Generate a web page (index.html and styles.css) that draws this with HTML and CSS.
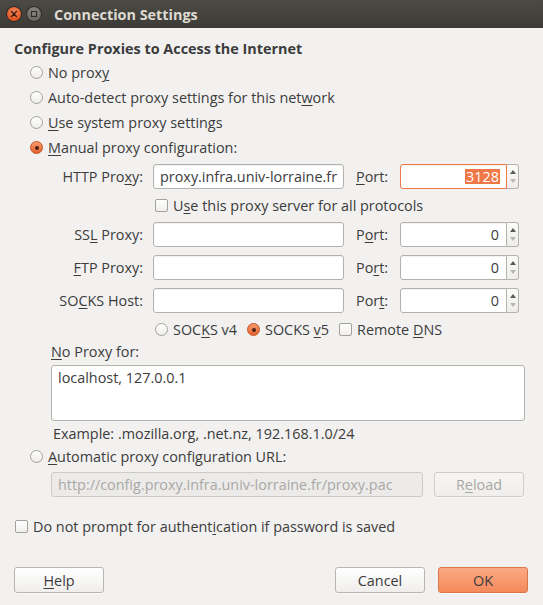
FILE: index.html
```html
<!DOCTYPE html>
<html>
<head>
<meta charset="utf-8">
<link rel="stylesheet" href="styles.css">
</head>
<body>
<div class="window">
  <div class="titlebar">
    <span class="wbtn close"><svg width="14" height="14" viewBox="0 0 14 14"><path d="M4.6 4.6 L9.4 9.4 M9.4 4.6 L4.6 9.4" stroke="#3a1a0e" stroke-width="1.4" stroke-linecap="round"/></svg></span>
    <span class="wbtn min"><svg width="14" height="14" viewBox="0 0 14 14"><rect x="4.5" y="4.5" width="5" height="5" fill="none" stroke="#2e2d2a" stroke-width="1.2"/></svg></span>
    <span class="title">Connection Settings</span>
  </div>
  <div class="content">
    <div class="heading">Configure Proxies to Access the Internet</div>
    <div class="options">
      <div class="radio-row"><span class="radio"></span><span>No prox<u>y</u></span></div>
      <div class="radio-row"><span class="radio"></span><span>Auto-detect proxy settings for this net<u>w</u>ork</span></div>
      <div class="radio-row"><span class="radio"></span><span><u>U</u>se system proxy settings</span></div>
      <div class="radio-row"><span class="radio on"></span><span><u>M</u>anual proxy configuration:</span></div>
    </div>
    <div class="proxy-grid">
      <div class="plabel"><span>HTTP Pro<u>x</u>y:</span></div>
      <div class="input"><span>proxy.infra.univ-lorraine.fr</span></div>
      <div class="portlabel"><span><u>P</u>ort:</span></div>
      <div class="input port focus"><span class="sel">3128</span></div>
      <div class="spin"><span class="up"></span><span class="down"></span></div>

      <div class="checkcell"><span class="check"></span><span>U<u>s</u>e this proxy server for all protocols</span></div>

      <div class="plabel"><span>SS<u>L</u> Proxy:</span></div>
      <div class="input"></div>
      <div class="portlabel"><span>P<u>o</u>rt:</span></div>
      <div class="input port"><span>0</span></div>
      <div class="spin"><span class="up"></span><span class="down"></span></div>

      <div class="plabel"><span><u>F</u>TP Proxy:</span></div>
      <div class="input"></div>
      <div class="portlabel"><span>Po<u>r</u>t:</span></div>
      <div class="input port"><span>0</span></div>
      <div class="spin"><span class="up"></span><span class="down"></span></div>

      <div class="plabel"><span>SO<u>C</u>KS Host:</span></div>
      <div class="input"></div>
      <div class="portlabel"><span>Por<u>t</u>:</span></div>
      <div class="input port"><span>0</span></div>
      <div class="spin"><span class="up"></span><span class="down"></span></div>

      <div class="socks">
        <span class="item"><span class="radio"></span><span>SOC<u>K</u>S v4</span></span>
        <span class="item"><span class="radio on"></span><span>SOCKS <u>v</u>5</span></span>
        <span class="item"><span class="check"></span><span>Remote <u>D</u>NS</span></span>
      </div>
    </div>
    <div class="noproxy">
      <div class="nplabel"><u>N</u>o Proxy for:</div>
      <div class="textarea">localhost, 127.0.0.1</div>
      <div class="example">Example: .mozilla.org, .net.nz, 192.168.1.0/24</div>
    </div>
    <div class="radio-row"><span class="radio"></span><span><u>A</u>utomatic proxy configuration URL:</span></div>
    <div class="urlrow">
      <div class="input disabled"><span>http://config.proxy.infra.univ-lorraine.fr/proxy.pac</span></div>
      <div class="button disabled"><span>R<u>e</u>load</span></div>
    </div>
    <div class="authrow"><span class="check"></span><span>Do not prompt for authent<u>i</u>cation if password is saved</span></div>
    <div class="buttons">
      <div class="button help"><span><u>H</u>elp</span></div>
      <div class="spacer"></div>
      <div class="button"><span>Cancel</span></div>
      <div class="button ok"><span>OK</span></div>
    </div>
  </div>
</div>
</body>
</html>
```
FILE: styles.css
```css
html, body {
  margin: 0;
  padding: 0;
  background: #f2f1f0;
}
body {
  font-family: "Open Sans", "Noto Sans", sans-serif;
  font-size: 14.4px;
  color: #3c3c3c;
}
u {
  text-decoration: underline;
  text-decoration-thickness: 1px;
  text-underline-offset: 2px;
}
.window {
  width: 543px;
  height: 605px;
  background: #f2f1f0;
  overflow: hidden;
}
.titlebar {
  height: 28px;
  background: linear-gradient(#4b4a45, #3c3b37);
  display: flex;
  align-items: center;
  padding-left: 7px;
  box-sizing: border-box;
}
.wbtn {
  width: 14px;
  height: 14px;
  border-radius: 50%;
  display: flex;
  margin-right: 6px;
}
.wbtn.close {
  background: radial-gradient(circle at 50% 35%, #f58b5e, #e0531f 70%);
  box-shadow: 0 0 0 1px #2b2a27;
}
.wbtn.min {
  background: radial-gradient(circle at 50% 35%, #8f8d87, #6b6964 70%);
  box-shadow: 0 0 0 1px #2b2a27;
}
.title {
  color: #dfdbd2;
  font-weight: bold;
  margin-left: 7px;
}
.content {
  padding: 11px 14px 0 14px;
}
.heading {
  font-weight: bold;
  line-height: 20px;
  margin-bottom: 1px;
}
.options {
  padding-left: 16px;
}
.radio-row {
  height: 25px;
  display: flex;
  align-items: center;
  padding-left: 16px;
}
.options .radio-row {
  padding-left: 0;
}
.radio {
  width: 11px;
  height: 11px;
  border-radius: 50%;
  border: 1px solid #a3a19c;
  background: linear-gradient(#ffffff, #eeedeb);
  margin-right: 5px;
  flex: none;
  position: relative;
}
.radio.on {
  border-color: #c4501f;
  background: linear-gradient(#f79a6e, #e5622d);
}
.radio.on::after {
  content: "";
  position: absolute;
  left: 3.5px;
  top: 3.5px;
  width: 4px;
  height: 4px;
  border-radius: 50%;
  background: #4a2414;
}
.check {
  width: 11px;
  height: 11px;
  border: 1px solid #a3a19c;
  border-radius: 2px;
  background: linear-gradient(#ffffff, #f0efed);
  margin-right: 5px;
  flex: none;
}
.proxy-grid {
  display: grid;
  grid-template-columns: 103px 191px 56px 107px 12px;
  grid-template-rows: 25px 17px 25px 25px 25px 17px;
  row-gap: 8px;
  margin-left: 36px;
  margin-top: 4px;
}
.plabel {
  padding-right: 10px;
  display: flex;
  align-items: center;
  justify-content: flex-end;
  white-space: nowrap;
}
.portlabel {
  padding-left: 12px;
  display: flex;
  align-items: center;
}
.input {
  border: 1px solid #b4b2ae;
  border-radius: 3px;
  background: #ffffff;
  box-sizing: border-box;
  height: 25px;
  display: flex;
  align-items: center;
  padding: 0 6px;
  white-space: nowrap;
  overflow: hidden;
  box-shadow: inset 0 1px 1px rgba(0,0,0,0.06);
}
.input.port {
  justify-content: flex-end;
  padding-right: 7px;
  border-radius: 3px 0 0 3px;
}
.input.focus {
  border-color: #f07746;
  padding-right: 6px;
}
.sel {
  background: #f07746;
  color: #ffffff;
  line-height: 15px;
  padding: 0 1px;
}
.spin {
  height: 25px;
  box-sizing: border-box;
  border: 1px solid #b4b2ae;
  border-left: none;
  border-radius: 0 3px 3px 0;
  background: linear-gradient(#fbfbfa, #eeedeb);
  display: flex;
  flex-direction: column;
  align-items: center;
  justify-content: center;
  gap: 5px;
}
.spin .up {
  width: 0;
  height: 0;
  border-left: 3px solid transparent;
  border-right: 3px solid transparent;
  border-bottom: 4px solid #5a5955;
}
.spin .down {
  width: 0;
  height: 0;
  border-left: 3px solid transparent;
  border-right: 3px solid transparent;
  border-top: 4px solid #b9b7b3;
}
.checkcell {
  grid-column: 2 / span 4;
  display: flex;
  align-items: center;
  padding-left: 2px;
  white-space: nowrap;
}
.socks {
  grid-column: 2 / span 4;
  display: flex;
  align-items: center;
  padding-left: 2px;
  gap: 10px;
}
.socks .item {
  display: flex;
  align-items: center;
}
.noproxy {
  padding-left: 37px;
  margin-top: 4px;
}
.nplabel {
  line-height: 20px;
}
.textarea {
  margin-top: 3px;
  height: 56px;
  width: 474px;
  box-sizing: border-box;
  border: 1px solid #b4b2ae;
  border-radius: 3px;
  background: #ffffff;
  padding: 2px 6px;
  line-height: 20px;
}
.example {
  line-height: 20px;
  margin-top: 3px;
  padding-left: 2px;
}
.urlrow {
  display: flex;
  margin-left: 37px;
  margin-top: 3px;
  gap: 11px;
}
.urlrow .input {
  width: 372px;
}
.input.disabled {
  background: #ecebea;
  color: #a9a8a5;
  border-color: #cdcbc8;
  box-shadow: none;
}
.button {
  height: 26px;
  box-sizing: border-box;
  border: 1px solid #b8b6b2;
  border-radius: 3px;
  background: linear-gradient(#ffffff, #efeeec);
  display: flex;
  align-items: center;
  justify-content: center;
  width: 90px;
  box-shadow: 0 1px 0 rgba(255,255,255,0.6);
}
.urlrow .button {
  height: 25px;
}
.button.disabled {
  color: #a9a8a5;
  border-color: #cfcdca;
  background: linear-gradient(#f7f6f5, #efeeec);
}
.authrow {
  display: flex;
  align-items: center;
  height: 20px;
  margin-top: 19px;
  padding-left: 1px;
}
.buttons {
  display: flex;
  margin-top: 31px;
}
.spacer {
  flex: 1;
}
.buttons .button + .button {
  margin-left: 13px;
}
.button.ok {
  border-color: #d9764a;
  background: linear-gradient(#fba985, #f48a5b);
}
.buttons .ok {
  margin-right: 1px;
}
```
